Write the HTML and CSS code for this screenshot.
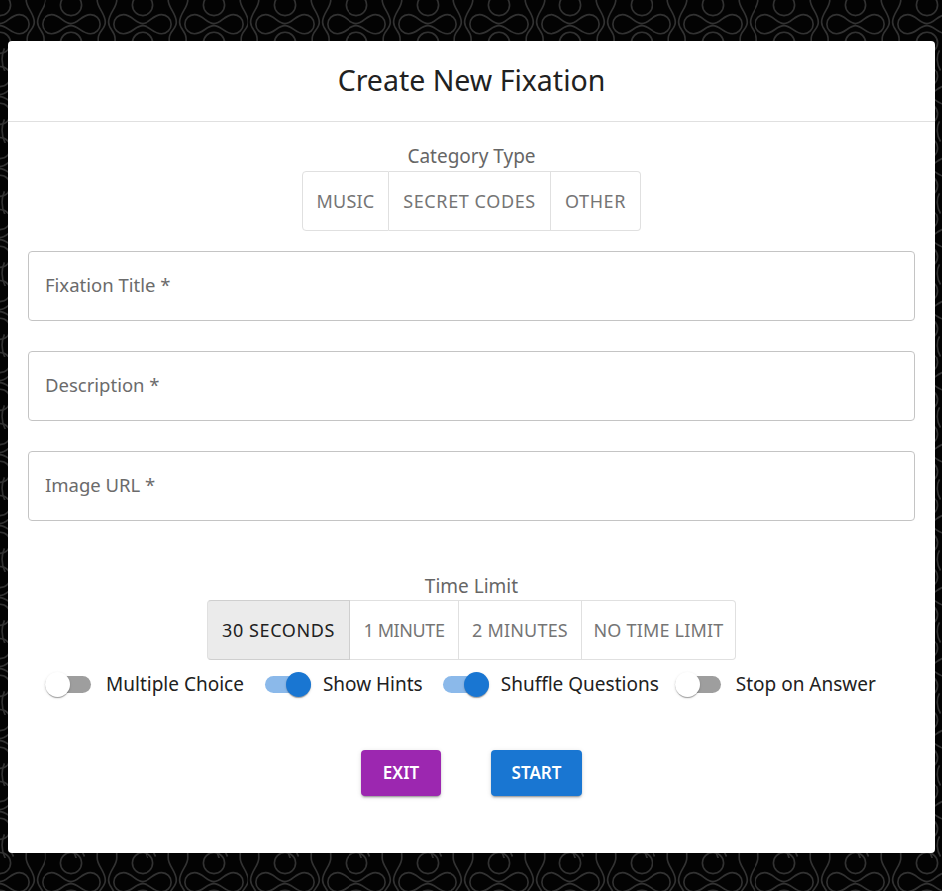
FILE: index.html
```html
<!DOCTYPE html>
<html>
<head>
    <title>Create New Fixation</title>
    <link rel="stylesheet" href="styles.css">
</head>
<body>
    <div class="modal">
        <h2 class="modal-title">Create New Fixation</h2>
        <form class="modal-body">
            <div class="group-label">Category Type</div>
            <div class="toggle-group">
                <button type="button" class="toggle toggle-music">MUSIC</button>
                <button type="button" class="toggle toggle-codes">SECRET CODES</button>
                <button type="button" class="toggle toggle-other">OTHER</button>
            </div>
            <input class="field field-first" type="text" placeholder="Fixation Title *">
            <input class="field" type="text" placeholder="Description *">
            <input class="field" type="text" placeholder="Image URL *">
            <div class="group-label group-label-time">Time Limit</div>
            <div class="toggle-group">
                <button type="button" class="toggle toggle-selected toggle-30s">30 SECONDS</button>
                <button type="button" class="toggle toggle-1m">1 MINUTE</button>
                <button type="button" class="toggle toggle-2m">2 MINUTES</button>
                <button type="button" class="toggle toggle-none">NO TIME LIMIT</button>
            </div>
            <div class="switch-row">
                <label class="switch-item switch-off"><span class="switch"><span class="knob"></span></span>Multiple Choice</label>
                <label class="switch-item switch-on switch-hints"><span class="switch"><span class="knob"></span></span>Show Hints</label>
                <label class="switch-item switch-on switch-shuffle"><span class="switch"><span class="knob"></span></span>Shuffle Questions</label>
                <label class="switch-item switch-off"><span class="switch"><span class="knob"></span></span>Stop on Answer</label>
            </div>
            <div class="actions">
                <button type="button" class="btn btn-exit">EXIT</button>
                <button type="button" class="btn btn-start">START</button>
            </div>
        </form>
    </div>
</body>
</html>
```

FILE: styles.css
```css
* {
    box-sizing: border-box;
}
html, body {
    margin: 0;
    height: 891px;
    overflow: hidden;
}
body {
    padding: 41px 7px 38px 8px;
    font-family: "Noto Sans", Arial, sans-serif;
    background-color: #030303;
    background-position: 35.6px 0;
    background-size: 71.3px 71.5px;
    background-image: url("data:image/svg+xml,%3Csvg xmlns='http://www.w3.org/2000/svg' width='71.3' height='71.5' viewBox='0 0 71.3 71.5'%3E%3Cg fill='none' stroke='rgb(50,50,50)' stroke-width='1.6'%3E%3Ccircle cx='35.65' cy='5' r='10.5'/%3E%3Ccircle cx='35.65' cy='76.5' r='10.5'/%3E%3Ccircle cx='35.65' cy='42.5' r='10.5'/%3E%3Cpath d='M35.65 23.5C43 23.5 46 14.5 55 14.5A9.5 9.5 0 0 1 55 33.5C46 33.5 43 25.5 35.65 25.5C28 25.5 25 33.5 16.3 33.5A9.5 9.5 0 0 1 16.3 14.5C25 14.5 28 23.5 35.65 23.5Z'/%3E%3Cpath d='M61.6 0C61.6 8 69.6 13 69.6 22C69.6 29 62.6 31 62.6 38C62.6 48 61.6 60 61.6 71.5'/%3E%3Cpath d='M9.7 0C9.7 8 1.6 13 1.6 22C1.6 29 8 31 8 38C8 48 9.7 60 9.7 71.5'/%3E%3Cpath d='M40 48C37 55 37 64 41 72M48 50C45 55 45 64 49 70'/%3E%3C/g%3E%3C/svg%3E");
}
.modal {
    height: 812px;
    background: #fff;
    border-radius: 4px;
}
.modal-title {
    margin: 0;
    height: 81px;
    border-bottom: 1px solid #e0e0e0;
    font-size: 28.5px;
    font-weight: 400;
    line-height: 78px;
    text-align: center;
    color: #212121;
}
.modal-body {
    display: flex;
    flex-direction: column;
    align-items: center;
    padding: 23px 20px 0;
}
.group-label {
    height: 26px;
    font-size: 19px;
    line-height: 23px;
    color: #666;
}
.group-label-time {
    margin-top: 53px;
    line-height: 24px;
}
.toggle-group {
    display: flex;
    height: 60px;
}
.toggle {
    padding: 0;
    border: 1px solid #e0e0e0;
    border-left: none;
    background: #fff;
    font-family: inherit;
    font-size: 18px;
    letter-spacing: .2px;
    color: #757575;
}
.toggle:first-child {
    border-left: 1px solid #e0e0e0;
    border-radius: 4px 0 0 4px;
}
.toggle:last-child {
    border-radius: 0 4px 4px 0;
}
.toggle-selected {
    background: #ebebeb;
    border-color: #cfcfcf;
    color: #212121;
}
.toggle-music { width: 87px; }
.toggle-codes { width: 162px; letter-spacing: .6px; }
.toggle-other { width: 90px; letter-spacing: .6px; }
.toggle-30s { width: 143px; letter-spacing: .6px; }
.toggle-1m { width: 109px; letter-spacing: -.4px; }
.toggle-2m { width: 123px; }
.toggle-none { width: 154px; }
.field {
    width: 100%;
    height: 70px;
    margin-top: 30px;
    padding: 0 16px 4px;
    border: 1px solid #c4c4c4;
    border-radius: 4px;
    font-family: inherit;
    font-size: 18.5px;
    outline: none;
}
.field-first {
    margin-top: 20px;
}
.field::placeholder {
    color: #6b6b6b;
    opacity: 1;
}
.switch-row {
    display: flex;
    align-self: flex-start;
    align-items: center;
    height: 50px;
    margin-top: -1px;
    padding-left: 17px;
}
.switch-item {
    display: flex;
    align-items: center;
    margin-right: 21px;
    font-size: 19px;
    color: #212121;
    white-space: nowrap;
}
.switch-hints {
    margin-right: 20px;
}
.switch-shuffle {
    margin-right: 16px;
}
.switch {
    position: relative;
    width: 46px;
    height: 17px;
    border-radius: 9px;
    background: #9e9e9e;
}
.knob {
    position: absolute;
    top: -4px;
    left: 0;
    width: 25px;
    height: 25px;
    border-radius: 50%;
    background: #fff;
    box-shadow: 0 2px 1px -1px rgba(0,0,0,.2), 0 1px 1px rgba(0,0,0,.14), 0 1px 3px rgba(0,0,0,.12);
}
.switch-off .switch {
    margin-right: 15px;
}
.switch-on .switch {
    margin-right: 12px;
    background: #8bb9ea;
}
.switch-on .knob {
    left: 21px;
    background: #1976d2;
}
.actions {
    display: flex;
    gap: 50px;
    margin-top: 41px;
}
.btn {
    height: 46px;
    padding: 0 0 2px;
    border: none;
    border-radius: 4px;
    font-family: inherit;
    font-size: 17px;
    font-weight: 600;
    color: #fff;
    box-shadow: 0 3px 1px -2px rgba(0,0,0,.2), 0 2px 2px rgba(0,0,0,.14), 0 1px 5px rgba(0,0,0,.12);
}
.btn-exit {
    width: 80px;
    background: #9c27b0;
}
.btn-start {
    width: 91px;
    background: #1976d2;
}
```
